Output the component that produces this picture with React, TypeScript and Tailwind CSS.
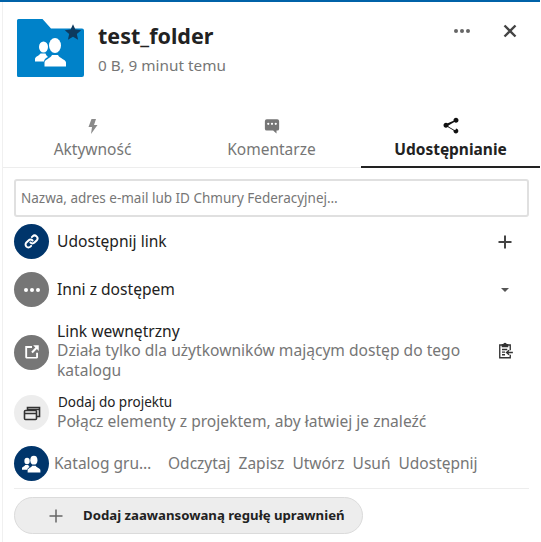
import type { ReactNode } from 'react';

function GroupIcon({ className }: { className?: string }) {
  return (
    <svg viewBox="0 0 32 30" className={className} fill="currentColor">
      <ellipse cx="8.500" cy="10" rx="4.500" ry="5.500" />
      <ellipse cx="20" cy="8.500" rx="6" ry="7.500" />
      <path d="M0 24.500v-2.500c0-2.500 4-3 5.500-5.500h5c.5 1.500 1.500 2.500 2.500 3.500-2 1-4 2-4 4.500z" />
      <path d="M9.500 29.500v-4c0-3 6-4 7.500-7.500h6c1.500 3.500 8 4.500 8 7.500v4z" />
    </svg>
  );
}

function Circle({ className, children }: { className: string; children: ReactNode }) {
  return (
    <div className={`flex h-[35px] w-[35px] shrink-0 items-center justify-center rounded-full ${className}`}>
      {children}
    </div>
  );
}

function Tab({ icon, label, active }: { icon: ReactNode; label: string; active?: boolean }) {
  return (
    <div
      className={`flex h-[53px] flex-1 flex-col items-center pt-[2px] ${
        active ? 'border-b-2 border-[#222222] font-bold text-[#222222]' : 'border-b border-[#ededed] text-[#767676]'
      }`}
    >
      <div className="flex h-[18px] items-center">{icon}</div>
      <span className="mt-[3px] text-[15.500px] leading-[22px]">{label}</span>
    </div>
  );
}

export default function App() {
  return (
    <div className="h-[542px] w-[541px] overflow-hidden bg-white font-['Noto_Sans',sans-serif] text-[#222222]">
      <div className="h-[2px] w-[540px] bg-[#0062a8]" />
      <div className="ml-[2px] flex h-[540px] w-[538px] flex-col border-l border-[#f0f0f0]">
        <header className="flex h-[113px] pl-[14px] pt-[17px]">
          <div className="relative h-[58px] w-[67px]">
            <svg viewBox="0 0 67 58" className="h-[58px] w-[67px]">
              <path
                d="M1.500 0h24l8.500 9.500h31a2 2 0 0 1 2 2V56a2 2 0 0 1-2 2H1.500A1.500 1.500 0 0 1 0 56.500v-55A1.500 1.500 0 0 1 1.500 0z"
                fill="#0082c9"
              />
            </svg>
            <GroupIcon className="absolute left-[18px] top-[18px] h-[30px] w-[32px] text-white" />
            <svg viewBox="0 0 24 24" className="absolute left-[47px] top-[4px] h-[18px] w-[18px] text-[#0d3a5f]" fill="currentColor">
              <path d="M12 1.500l3.200 7.200 7.800.8-5.900 5.200 1.700 7.700L12 18.400l-6.800 4 1.700-7.700L1 9.500l7.800-.8z" />
            </svg>
          </div>
          <div className="ml-[14px] flex flex-col pt-[2px]">
            <span className="text-[21.500px] font-bold leading-[30px]">test_folder</span>
            <span className="mt-[4px] text-[15.300px] leading-[20px] text-[#767676]">0 B, 9 minut temu</span>
          </div>
          <div className="ml-auto mr-[23px] flex items-center gap-[33px] self-start pt-[5px]">
            <div className="flex gap-[2px]">
              <span className="h-[4px] w-[4px] rounded-full bg-[#666666]" />
              <span className="h-[4px] w-[4px] rounded-full bg-[#666666]" />
              <span className="h-[4px] w-[4px] rounded-full bg-[#666666]" />
            </div>
            <svg viewBox="0 0 14 14" className="h-[14px] w-[14px] text-[#444444]" stroke="currentColor" strokeWidth="2.400" fill="none">
              <path d="M1.500 1.500l11 11M12.500 1.500l-11 11" />
            </svg>
          </div>
        </header>

        <nav className="flex h-[53px]">
          <Tab
            label="Aktywność"
            icon={
              <svg viewBox="0 0 10 15" className="h-[15px] w-[10px] text-[#8a8a8a]" fill="currentColor">
                <path d="M3.500 0L0.500 8H4L3 15l6.500-9H6L8 0z" />
              </svg>
            }
          />
          <Tab
            label="Komentarze"
            icon={
              <svg viewBox="0 0 24 24" className="h-[18px] w-[18px] text-[#767676]" fill="currentColor">
                <path
                  fillRule="evenodd"
                  d="M5 3h14a2.500 2.500 0 0 1 2.500 2.500v10A2.500 2.500 0 0 1 19 18h-1v4l-4.500-4H5a2.500 2.500 0 0 1-2.500-2.500v-10A2.500 2.500 0 0 1 5 3zm2 7.500a1.500 1.500 0 1 0 0-3 1.500 1.500 0 0 0 0 3zm5 0a1.500 1.500 0 1 0 0-3 1.500 1.500 0 0 0 0 3zm5 0a1.500 1.500 0 1 0 0-3 1.500 1.500 0 0 0 0 3z"
                />
              </svg>
            }
          />
          <Tab
            active
            label="Udostępnianie"
            icon={
              <svg viewBox="0 0 24 24" className="h-[20px] w-[20px] text-[#111111]" fill="currentColor">
                <path d="M18 16.100c-.8 0-1.500.3-2 .8l-7.100-4.200c.1-.2.100-.5.100-.7s0-.5-.1-.7L16 7.200c.500.5 1.200.8 2 .8 1.700 0 3-1.300 3-3s-1.300-3-3-3-3 1.300-3 3c0 .2 0 .5.100.7L8 8.800C7.500 8.300 6.800 8 6 8c-1.700 0-3 1.300-3 3s1.300 3 3 3c.8 0 1.500-.3 2-.8l7.100 4.200c-.1.2-.1.400-.1.600 0 1.600 1.300 2.900 2.900 2.900s2.900-1.300 2.900-2.900-1.300-2.900-2.900-2.900z" />
              </svg>
            }
          />
        </nav>

        <div className="flex flex-col pl-[11px] pr-[11px]">
          <div className="mt-[11px] flex h-[38px] w-[515px] items-center rounded-[3px] border-2 border-[#e0e0e0] px-[5px] text-[13.500px] text-[#767676]">
            Nazwa, adres e-mail lub ID Chmury Federacyjnej…
          </div>

          <div className="mt-[7px] flex h-[35px] items-center">
            <Circle className="bg-[#00356b] text-white">
              <svg viewBox="0 0 24 24" className="h-[17px] w-[17px]" fill="none" stroke="currentColor" strokeWidth="2.800" strokeLinecap="round">
                <path d="M10.500 13.500a4 4 0 0 0 5.700 0l3-3a4 4 0 0 0-5.700-5.700l-1 1" />
                <path d="M13.500 10.500a4 4 0 0 0-5.700 0l-3 3a4 4 0 0 0 5.700 5.700l1-1" />
              </svg>
            </Circle>
            <span className="ml-[8px] text-[15.600px]">Udostępnij link</span>
            <svg viewBox="0 0 14 14" className="ml-auto mr-[17px] h-[14px] w-[14px] text-[#444444]" stroke="currentColor" strokeWidth="2" fill="none">
              <path d="M7 0.500v13M0.500 7h13" />
            </svg>
          </div>

          <div className="mt-[13px] flex h-[35px] items-center">
            <Circle className="bg-[#767676] text-white">
              <div className="flex gap-[2px]">
                <span className="h-[4px] w-[4px] rounded-full bg-white" />
                <span className="h-[4px] w-[4px] rounded-full bg-white" />
                <span className="h-[4px] w-[4px] rounded-full bg-white" />
              </div>
            </Circle>
            <span className="ml-[8px] text-[15.600px]">Inni z dostępem</span>
            <div className="ml-auto mr-[20px] h-0 w-0 border-x-[4.500px] border-t-[4.500px] border-x-transparent border-t-[#555555]" />
          </div>

          <div className="mt-[14px] flex items-center">
            <Circle className="mt-[3px] bg-[#767676] text-white">
              <svg viewBox="0 0 24 24" className="h-[18px] w-[18px]" fill="currentColor">
                <path d="M3 4h9v2.500H5.500v12h12V13H20v6a1.500 1.500 0 0 1-1.500 1.500h-14A1.500 1.500 0 0 1 3 19z" />
                <path d="M13.500 3H21v7.500l-2.500-2.500-5.500 5.500-2-2L16.500 6z" />
              </svg>
            </Circle>
            <div className="ml-[8px] flex flex-col">
              <span className="text-[15.600px] leading-[20px]">Link wewnętrzny</span>
              <span className="w-[430px] text-[15.600px] leading-[19.500px] text-[#767676]">
                Działa tylko dla użytkowników mającym dostęp do tego katalogu
              </span>
            </div>
            <svg viewBox="0 0 24 24" className="ml-auto mr-[15px] h-[18px] w-[18px] text-[#333333]" fill="none" stroke="currentColor" strokeWidth="1.800">
              <path d="M8.500 4H5v17h14v-4M19 11V4h-3.500" />
              <path d="M8.500 6V3.500h2a1.500 1.500 0 0 1 3 0h2V6z" fill="currentColor" />
              <path d="M8 10h7M8 13.500h4M8 17h4M22.500 14H14m3.500-3l-3.500 3 3.500 3" />
            </svg>
          </div>

          <div className="mt-[14px] flex items-center">
            <Circle className="bg-[#ededed] text-[#333333]">
              <svg viewBox="0 0 18 18" className="h-[18px] w-[18px]" fill="none" stroke="currentColor" strokeWidth="1.600">
                <rect x="1.500" y="6.500" width="12" height="9" rx="1" />
                <path d="M1.500 9.500h12M4.500 6.500V3.500h12v9h-3M4.500 5.500h12" />
              </svg>
            </Circle>
            <div className="ml-[9px] flex flex-col">
              <span className="text-[13.500px] leading-[17px]">Dodaj do projektu</span>
              <span className="-ml-px text-[15.600px] leading-[20px] text-[#767676]">
                Połącz elementy z projektem, aby łatwiej je znaleźć
              </span>
            </div>
          </div>

          <div className="mt-[15px] flex items-center text-[15.500px] text-[#767676]">
            <Circle className="bg-[#00356b] text-white">
              <GroupIcon className="h-[18px] w-[19px]" />
            </Circle>
            <span className="ml-[5px] w-[103px]">Katalog gru…</span>
            <span className="ml-[11px]">Odczytaj</span>
            <span className="ml-[8px]">Zapisz</span>
            <span className="ml-[8px]">Utwórz</span>
            <span className="ml-[8px]">Usuń</span>
            <span className="ml-[8px]">Udostępnij</span>
          </div>

          <div className="mt-[7px] h-px w-[515px] bg-[#ededed]" />

          <div className="mt-[8px] flex h-[37px] w-[349px] items-center rounded-full border border-[#dbdbdb] bg-[#ededed]">
            <svg viewBox="0 0 14 14" className="ml-[34px] h-[14px] w-[14px] text-[#666666]" stroke="currentColor" strokeWidth="1.500" fill="none">
              <path d="M7 0.500v13M0.500 7h13" />
            </svg>
            <span className="ml-[20px] text-[13.200px] font-bold text-[#222222]">Dodaj zaawansowaną regułę uprawnień</span>
          </div>
        </div>
      </div>
    </div>
  );
}
